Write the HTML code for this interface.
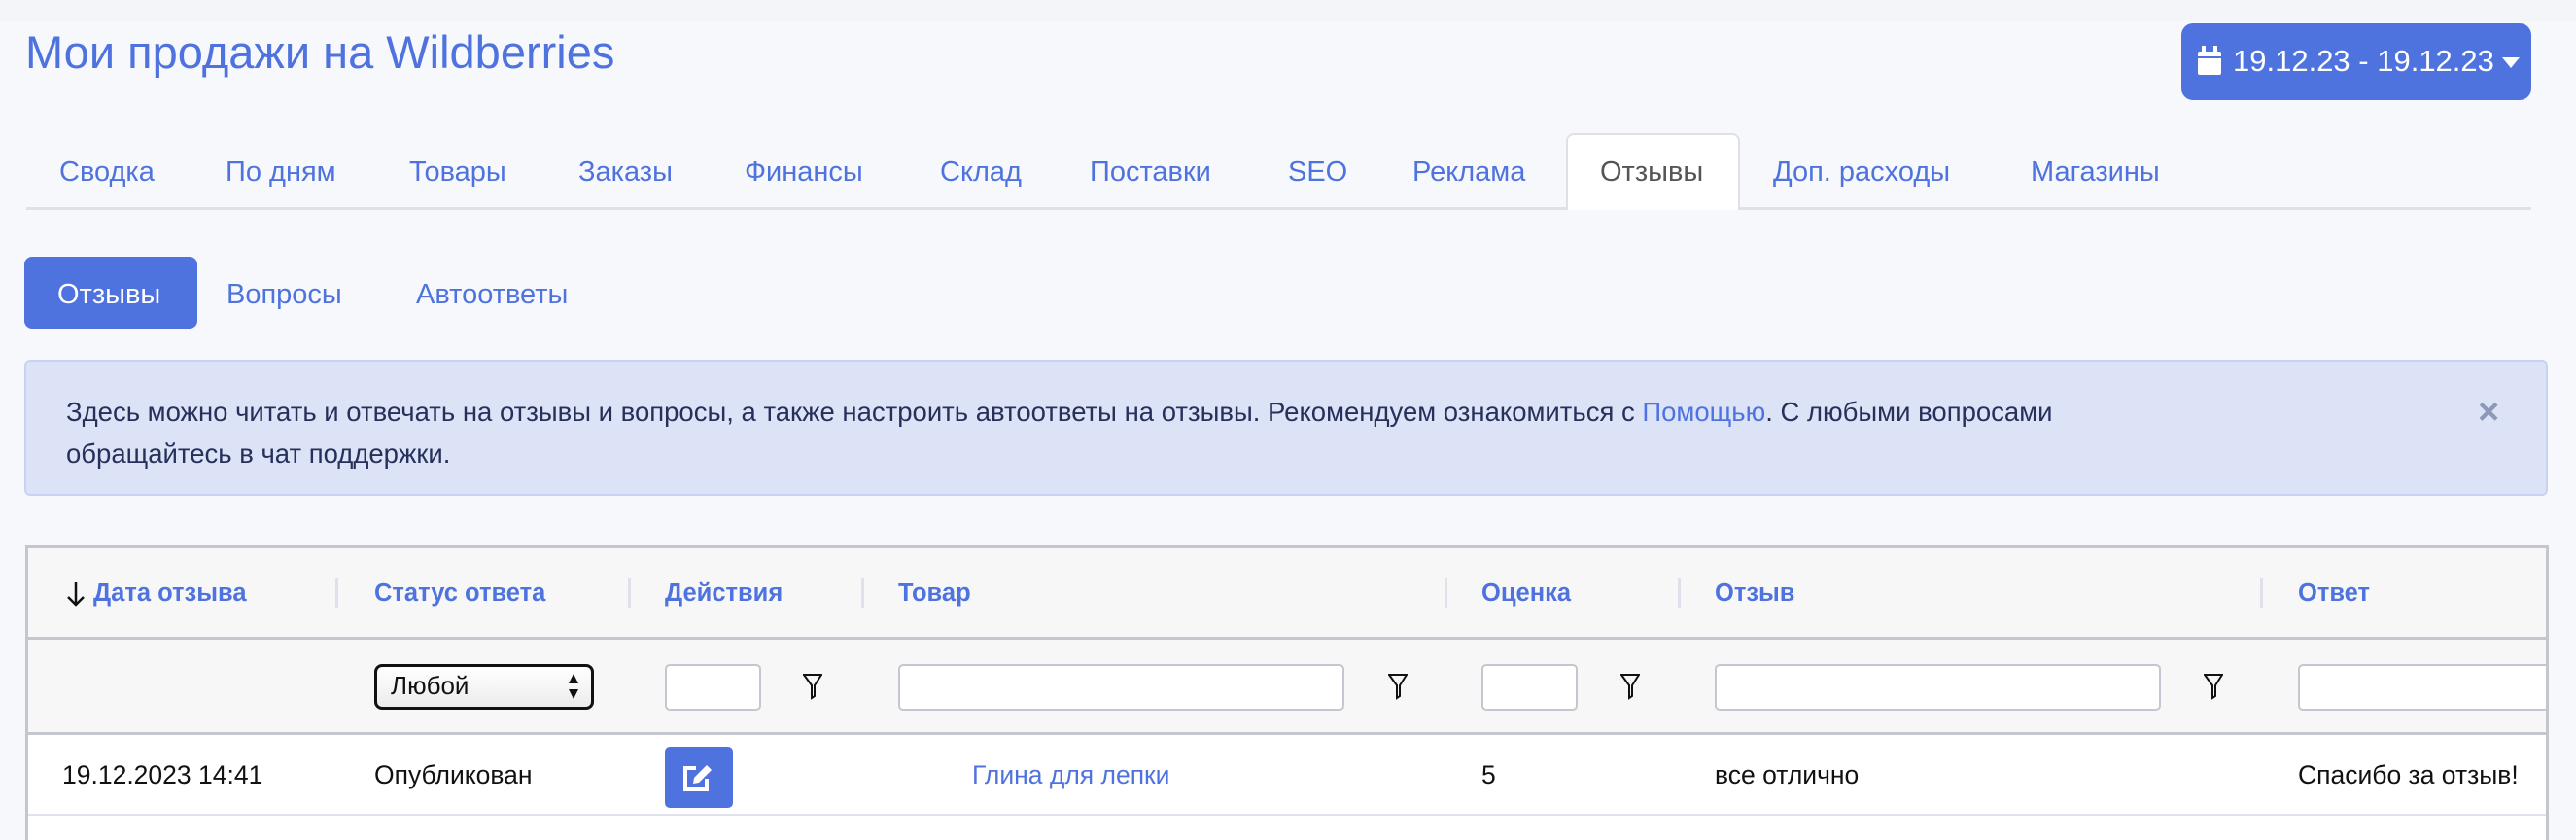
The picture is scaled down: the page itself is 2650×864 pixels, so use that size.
<!DOCTYPE html>
<html><head><meta charset="utf-8"><style>
*{margin:0;padding:0;box-sizing:border-box}
body{width:2650px;height:864px;overflow:hidden;background:#f7f8fc;font-family:"Liberation Sans",sans-serif;position:relative}
.a{position:absolute;white-space:nowrap}
.top{position:absolute;left:0;top:0;width:2650px;height:22px;background:#f4f5f8}
.t{position:absolute;top:159px;font-size:29px;color:#4f73de;line-height:36px}
.th{position:absolute;top:596px;font-size:25.5px;font-weight:bold;color:#4f73de;line-height:28px}
.sep{position:absolute;top:595px;width:3px;height:30px;background:#dfe2ea}
.in{position:absolute;top:683px;height:48px;background:#fff;border:2px solid #c3c7cf;border-radius:5px}
.fn{position:absolute;top:692px}
.td{position:absolute;top:782px;font-size:26.5px;color:#111;line-height:30px}
</style></head><body>
<div class="top"></div>
<div class="a" style="left:26px;top:26px;font-size:47px;color:#4f73de;line-height:56px">Мои продажи на Wildberries</div>
<div class="a" style="left:2244px;top:24px;width:360px;height:79px;background:#4f73de;border-radius:12px"></div>
<svg class="a" style="left:2261px;top:47px" width="24" height="30" viewBox="0 0 24 30"><rect x="0" y="6" width="24" height="24" rx="2" fill="#fff"/><rect x="4" y="0" width="4" height="8" fill="#fff"/><rect x="16" y="0" width="4" height="8" fill="#fff"/><rect x="0" y="11" width="24" height="2" fill="#4f73de"/></svg>
<div class="a" style="left:2297px;top:45px;font-size:31px;color:#fff;line-height:36px">19.12.23 - 19.12.23</div>
<svg class="a" style="left:2574px;top:59px" width="18" height="12"><path d="M0 0H18L9 11Z" fill="#fff"/></svg>

<div class="a" style="left:27px;top:213px;width:2577px;height:3px;background:#dfe0ea"></div>
<div class="a" style="left:1611px;top:137px;width:179px;height:79px;background:#fff;border:2px solid #dfe0ea;border-bottom:none;border-radius:8px 8px 0 0"></div>
<div class="t" style="left:61px">Сводка</div>
<div class="t" style="left:232px">По дням</div>
<div class="t" style="left:421px">Товары</div>
<div class="t" style="left:595px">Заказы</div>
<div class="t" style="left:766px">Финансы</div>
<div class="t" style="left:967px">Склад</div>
<div class="t" style="left:1121px">Поставки</div>
<div class="t" style="left:1325px">SEO</div>
<div class="t" style="left:1453px">Реклама</div>
<div class="t" style="left:1646px;color:#555">Отзывы</div>
<div class="t" style="left:1824px">Доп. расходы</div>
<div class="t" style="left:2089px">Магазины</div>

<div class="a" style="left:25px;top:264px;width:178px;height:74px;background:#4f73de;border-radius:8px"></div>
<div class="a" style="left:59px;top:285px;font-size:29px;color:#fff;line-height:36px">Отзывы</div>
<div class="a" style="left:233px;top:285px;font-size:29px;color:#4f73de;line-height:36px">Вопросы</div>
<div class="a" style="left:428px;top:285px;font-size:29px;color:#4f73de;line-height:36px">Автоответы</div>

<div class="a" style="left:25px;top:370px;width:2596px;height:140px;background:#dde3f7;border:2px solid #c8d3f3;border-radius:6px"></div>
<div class="a" style="left:68px;top:402px;font-size:27.5px;color:#26305a;line-height:43px">Здесь можно читать и отвечать на отзывы и вопросы, а также настроить автоответы на отзывы. Рекомендуем ознакомиться с <span style="color:#4f73de">Помощью</span>. С любыми вопросами<br>обращайтесь в чат поддержки.</div>
<div class="a" style="left:2549px;top:402px;font-size:38px;font-weight:bold;color:#8d99b6;line-height:44px">×</div>

<div class="a" style="left:26px;top:561px;width:2596px;height:303px;background:#fff;border:3px solid #c3c6cd;border-bottom:none;overflow:hidden"></div>
<div class="a" style="left:29px;top:564px;width:2590px;height:191px;background:#f7f7f8"></div>
<div class="a" style="left:29px;top:655px;width:2590px;height:3px;background:#c3c6cd"></div>
<div class="a" style="left:29px;top:753px;width:2590px;height:3px;background:#c3c6cd"></div>
<div class="a" style="left:29px;top:837px;width:2590px;height:2px;background:#dfe2ea"></div>

<svg class="a" style="left:68px;top:598px" width="20" height="26" viewBox="0 0 20 26"><path d="M10 1V24M2 16L10 24L18 16" fill="none" stroke="#111" stroke-width="2.5"/></svg>
<div class="th" style="left:96px">Дата отзыва</div>
<div class="sep" style="left:345px"></div>
<div class="th" style="left:385px">Статус ответа</div>
<div class="sep" style="left:646px"></div>
<div class="th" style="left:684px">Действия</div>
<div class="sep" style="left:886px"></div>
<div class="th" style="left:924px">Товар</div>
<div class="sep" style="left:1486px"></div>
<div class="th" style="left:1524px">Оценка</div>
<div class="sep" style="left:1726px"></div>
<div class="th" style="left:1764px">Отзыв</div>
<div class="sep" style="left:2325px"></div>
<div class="th" style="left:2364px">Ответ</div>

<div class="a" style="left:385px;top:683px;width:226px;height:47px;border:3px solid #111;border-radius:8px;background:linear-gradient(#fff,#ececec)"></div>
<div class="a" style="left:402px;top:690px;font-size:26px;color:#111;line-height:30px">Любой</div>
<svg class="a" style="left:584px;top:693px" width="12" height="26"><path d="M6 0L11 10H1Z M6 26L11 16H1Z" fill="#111"/></svg>
<div class="in" style="left:684px;width:99px"></div>
<div class="in" style="left:924px;width:459px"></div>
<div class="in" style="left:1524px;width:99px"></div>
<div class="in" style="left:1764px;width:459px"></div>
<div class="in" style="left:2364px;width:255px;border-right:none;border-radius:5px 0 0 5px"></div>
<svg class="fn" style="left:826px" width="20" height="28" viewBox="0 0 20 28"><path d="M1 2H19L12 13V24L9 26V13Z" fill="none" stroke="#111" stroke-width="2"/></svg>
<svg class="fn" style="left:1428px" width="20" height="28" viewBox="0 0 20 28"><path d="M1 2H19L12 13V24L9 26V13Z" fill="none" stroke="#111" stroke-width="2"/></svg>
<svg class="fn" style="left:1667px" width="20" height="28" viewBox="0 0 20 28"><path d="M1 2H19L12 13V24L9 26V13Z" fill="none" stroke="#111" stroke-width="2"/></svg>
<svg class="fn" style="left:2267px" width="20" height="28" viewBox="0 0 20 28"><path d="M1 2H19L12 13V24L9 26V13Z" fill="none" stroke="#111" stroke-width="2"/></svg>

<div class="td" style="left:64px">19.12.2023 14:41</div>
<div class="td" style="left:385px">Опубликован</div>
<div class="a" style="left:684px;top:768px;width:70px;height:63px;background:#4f73de;border-radius:5px"></div>
<svg class="a" style="left:701px;top:784px" width="36" height="32" viewBox="0 0 36 32"><path d="M15 6H4V28H26V17" fill="none" stroke="#fff" stroke-width="4"/><path d="M12 22L13 16L26 3L31 8L18 21Z" fill="#fff"/></svg>
<div class="td" style="left:1000px;color:#4f73de">Глина для лепки</div>
<div class="td" style="left:1524px">5</div>
<div class="td" style="left:1764px">все отлично</div>
<div class="td" style="left:2364px">Спасибо за отзыв!</div>
</body></html>
